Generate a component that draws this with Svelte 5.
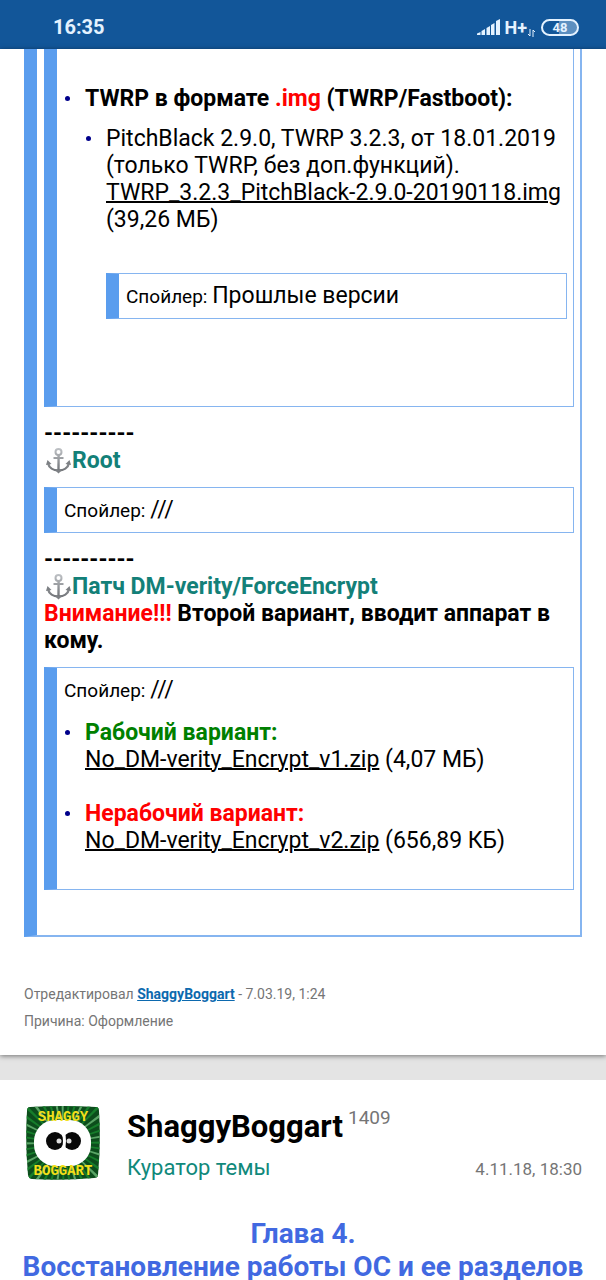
<script>
  const files = [
    { kind: 'good', title: 'Рабочий вариант:', name: 'No_DM-verity_Encrypt_v1.zip', size: '4,07 МБ' },
    { kind: 'bad', title: 'Нерабочий вариант:', name: 'No_DM-verity_Encrypt_v2.zip', size: '656,89 КБ' }
  ];

  const rays = Array.from({ length: 40 }, (_, i) => i * 9);
</script>

{#snippet anchor()}
  <svg class="anchor" viewBox="0 0 26 27" aria-hidden="true">
    <defs>
      <linearGradient id="steel" x1="0" y1="0" x2="0" y2="27" gradientUnits="userSpaceOnUse">
        <stop offset="0" stop-color="#c3c6ca" />
        <stop offset="1" stop-color="#66696d" />
      </linearGradient>
    </defs>
    <g fill="none" stroke="url(#steel)" stroke-width="2">
      <circle cx="13" cy="5" r="3" />
      <path d="M13.1 8 L13 24" stroke-width="2.4" />
      <path d="M8 11 L18 11.1" />
      <path d="M2.5 16 C3.500 21 8 23.5 13 23.5 C18 23.5 22.5 21 23.5 16" stroke-width="2.4" />
    </g>
    <path d="M0.5 18 L2 13 L6 17 Z M25.5 18 L24 13 L20 17 Z M9.5 23 H16.5 L13 26.5 Z" fill="#7d8084" />
  </svg>
{/snippet}

{#snippet head(name)}
  <button class="spoiler-head" type="button"><span class="label">Спойлер:&#32;</span>{name}</button>
{/snippet}

<header class="status">
  <time>16:35</time>
  <div class="status-icons">
    <svg width="23" height="17" viewBox="0 0 23 17" aria-hidden="true">
      <path d="M0 16 L0 14.5 L3.500 13 V16 Z M4.500 16 V12 L8 10 V16 Z M9.500 16 V9 L13 7 V16 Z M14 16 V6 L17.500 4 V16 Z M19 16 V2 L23 0 V16 Z" fill="#e4f2ff" />
    </svg>
    <span class="net">H+</span>
    <svg class="arrows" width="7" height="8" viewBox="0 0 7 8" aria-hidden="true">
      <path d="M2 0 V7 L0 5 M5 8 V1 L7 3" fill="none" stroke="#e4f2ff" />
    </svg>
    <span class="battery">48</span>
  </div>
</header>

<main>
  <article class="post">
    <div class="spoiler outer">
      <div class="spoiler first">
        <ul>
          <li>
            <b>TWRP в формате <span class="red">.img</span> (TWRP/Fastboot):</b>
            <ul class="nested">
              <li>
                PitchBlack 2.9.0, TWRP 3.2.3, от 18.01.2019<br />
                (только TWRP, без доп.функций).<br />
                <a href="#twrp">TWRP_3.2.3_PitchBlack-2.9.0-20190118.img</a>
                (39,26 МБ)
                <div class="spoiler old">{@render head('Прошлые версии')}</div>
              </li>
            </ul>
          </li>
        </ul>
      </div>

      <b>----------</b><br />
      {@render anchor()}<b class="teal">Root</b>
      <div class="spoiler">{@render head('///')}</div>

      <b>----------</b><br />
      {@render anchor()}<b class="teal">Патч DM-verity/ForceEncrypt</b><br />
      <b><span class="red">Внимание!!!</span> Второй вариант, вводит аппарат в кому.</b>
      <div class="spoiler">
        {@render head('///')}
        <ul class="files">
          {#each files as file}
            <li>
              <b class={file.kind}>{file.title}</b><br />
              <a href="#{file.name}">{file.name}</a> ({file.size})
            </li>
          {/each}
        </ul>
      </div>
    </div>

    <footer class="edited">
      Отредактировал <a href="#user">ShaggyBoggart</a> - 7.03.19, 1:24<br />
      Причина: Оформление
    </footer>
  </article>

  <article class="post next">
    <div class="author">
      <svg class="avatar" viewBox="0 0 74 74" role="img" aria-label="ShaggyBoggart">
        <clipPath id="frame"><path d="M4 1 Q37 -1 70 1 Q73 1 73 5 Q75 37 72 69 Q72 72 68 72 Q37 75 6 73 Q3 73 2 69 Q-1 37 1 5 Q1 1 4 1 Z" /></clipPath>
        <g clip-path="url(#frame)">
          <rect width="74" height="74" fill="#0c4d1c" />
          {#each rays as angle, i}
            <path d="M37 37 L35 -16 L38 -16 Z" fill={i % 3 ? '#167d2b' : '#5aa566'} transform="rotate({angle} 37 37)" />
          {/each}
          <rect x="8" y="14" width="57" height="46" rx="21" fill="#fff" />
          <circle cx="29" cy="35" r="9" fill="#080808" />
          <circle cx="46" cy="35" r="9" fill="#080808" />
          <path d="M37 25 Q40 35 37 45" stroke="#fff" stroke-width="3" fill="none" />
          <circle cx="33" cy="35" r="2.500" fill="#ddd" />
          <circle cx="43" cy="35" r="2.500" fill="#ddd" />
          <text x="37" y="15" text-anchor="middle">SHAGGY</text>
          <text x="37" y="69" text-anchor="middle">BOGGART</text>
        </g>
      </svg>
      <div class="who">
        <h2>ShaggyBoggart<sup>1409</sup></h2>
        <div class="meta"><span class="role">Куратор темы</span><time>4.11.18, 18:30</time></div>
      </div>
    </div>
    <h1>Глава 4.<br />Восстановление работы ОС и ее разделов</h1>
  </article>
</main>

<style>
  :global(html) {
    overflow: hidden;
  }

  :global(body) {
    background: #e4e4e4;
    font: 23px/27px Roboto, "Noto Sans", sans-serif;
    color: #000;
  }

  .status {
    display: flex;
    justify-content: space-between;
    align-items: center;
    height: 49px;
    padding: 5px 27px 0 53px;
    box-sizing: border-box;
    background: #125699;
    color: #e4f2ff;
    font-size: 20px;
    font-weight: 700;
  }

  .status-icons {
    display: flex;
    align-items: center;
    gap: 4px;
  }

  .net {
    font-size: 18px;
  }

  .arrows {
    align-self: flex-end;
    margin: 0 2px 4px -3px;
  }

  .battery {
    width: 38px;
    height: 17px;
    box-sizing: border-box;
    border: 2px solid #e4f2ff;
    border-radius: 9px;
    background: linear-gradient(to right, #125699 48%, #5c8fc0 48%);
    font-size: 13px;
    line-height: 13px;
    text-align: center;
  }

  .post {
    background: #fff;
    padding: 0 24px 20px;
    box-shadow: 0 1px 5px rgba(0, 0, 0, 0.5);
  }

  .spoiler {
    margin: 13px 0;
    padding: 8px 6px 8px 7px;
    border: 1px solid #86b5f0;
    border-left: 13px solid #5a9dee;
  }

  .outer {
    margin: 0;
    padding: 0 6px 32px 7px;
    border-top: 0;
    border-right-width: 2px;
    border-bottom-width: 2px;
  }

  .first {
    margin-top: 0;
    border-top: 0;
    padding: 36px 6px 74px 7px;
  }

  .spoiler-head {
    display: block;
    width: 100%;
    padding: 0;
    border: 0;
    background: none;
    color: inherit;
    font: inherit;
    text-align: left;
    cursor: pointer;
  }

  .label {
    font-size: 19px;
  }

  ul {
    margin: 0;
    padding-left: 21px;
    list-style: none;
  }

  li {
    position: relative;
  }

  li::before {
    content: "";
    position: absolute;
    left: -20px;
    top: 11px;
    width: 5px;
    height: 5px;
    border-radius: 50%;
    background: #00008b;
  }

  .nested {
    margin-top: 13px;
  }

  .old {
    margin: 40px 0 13px;
  }

  .files {
    margin-top: 15px;
  }

  .files li {
    margin-bottom: 27px;
  }

  a {
    color: inherit;
    text-decoration-thickness: 2px;
  }

  .red,
  .bad {
    color: #f00;
  }

  .good {
    color: #008000;
  }

  .teal {
    color: #138078;
  }

  .anchor {
    width: 27px;
    height: 27px;
    margin-left: 1px;
    vertical-align: bottom;
  }

  .edited {
    margin-top: 44px;
    color: #757575;
    font-size: 14px;
  }

  .edited a {
    color: #0c69ae;
    font-weight: 700;
    text-decoration-thickness: 1px;
  }

  .next {
    margin-top: 25px;
    padding-top: 26px;
    box-shadow: none;
  }

  .author {
    display: flex;
    gap: 27px;
    padding-left: 2px;
  }

  .avatar {
    width: 74px;
    height: 74px;
    flex: none;
  }

  .avatar text {
    fill: #f3df19;
    font: 700 14px "Liberation Mono", monospace;
  }

  .who {
    flex: 1;
  }

  h2 {
    display: flex;
    gap: 5px;
    margin: 0;
    font-size: 31px;
    font-weight: 700;
    line-height: 42px;
  }

  sup {
    color: #757575;
    font-size: 19px;
    font-weight: 400;
    line-height: 24px;
  }

  .meta {
    display: flex;
    justify-content: space-between;
    align-items: center;
    line-height: 40px;
  }

  .role {
    color: #10897b;
    font-size: 22px;
  }

  .meta time {
    padding-top: 3px;
    color: #757575;
    font-size: 17px;
    line-height: 37px;
  }

  h1 {
    margin: 29px -20px 0;
    color: #4169e1;
    font-size: 28px;
    line-height: 33px;
    text-align: center;
  }
</style>
